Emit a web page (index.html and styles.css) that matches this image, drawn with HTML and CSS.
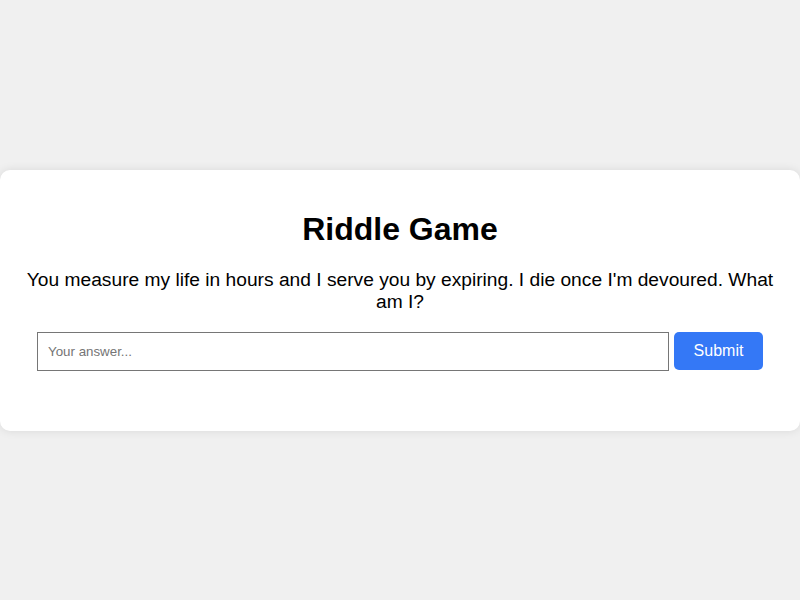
FILE: index.html
```html
<!DOCTYPE html>
<html>
<head>
<meta charset="utf-8">
<link rel="stylesheet" href="styles.css">
</head>
<body>
<div class="card">
  <h1 class="title">Riddle Game</h1>
  <p class="riddle">You measure my life in hours and I serve you by expiring. I die once I'm devoured. What am I?</p>
  <form class="form">
    <input class="answer" type="text" placeholder="Your answer...">
    <button class="submit" type="button">Submit</button>
  </form>
  <div class="result"></div>
</div>
</body>
</html>
```

FILE: styles.css
```css
html, body {
  margin: 0;
  height: 100%;
}
body {
  background: #f0f0f0;
  font-family: "Liberation Sans", Arial, sans-serif;
  display: flex;
  align-items: center;
  justify-content: center;
}
.card {
  box-sizing: border-box;
  width: 100%;
  background: #fff;
  border-radius: 10px;
  box-shadow: 0 0 10px rgba(0, 0, 0, 0.1);
  padding: 20px;
  text-align: center;
}
.title {
  font-size: 32px;
  margin: 21px 0;
}
.riddle {
  font-size: 19.2px;
  margin: 0 0 19px;
}
.form {
  display: flex;
  justify-content: center;
  align-items: center;
  gap: 5px;
}
.answer {
  width: 632px;
  height: 39px;
  box-sizing: border-box;
  border: 1px solid #767676;
  padding: 0 10px;
  font-family: "Liberation Sans", Arial, sans-serif;
  font-size: 13.33px;
  border-radius: 0;
}
.answer::placeholder {
  color: #757575;
}
.submit {
  width: 89px;
  height: 38px;
  border: none;
  border-radius: 5px;
  background: #3478f6;
  color: #fff;
  font-family: "Liberation Sans", Arial, sans-serif;
  font-size: 16px;
}
.result {
  height: 40px;
}
```
